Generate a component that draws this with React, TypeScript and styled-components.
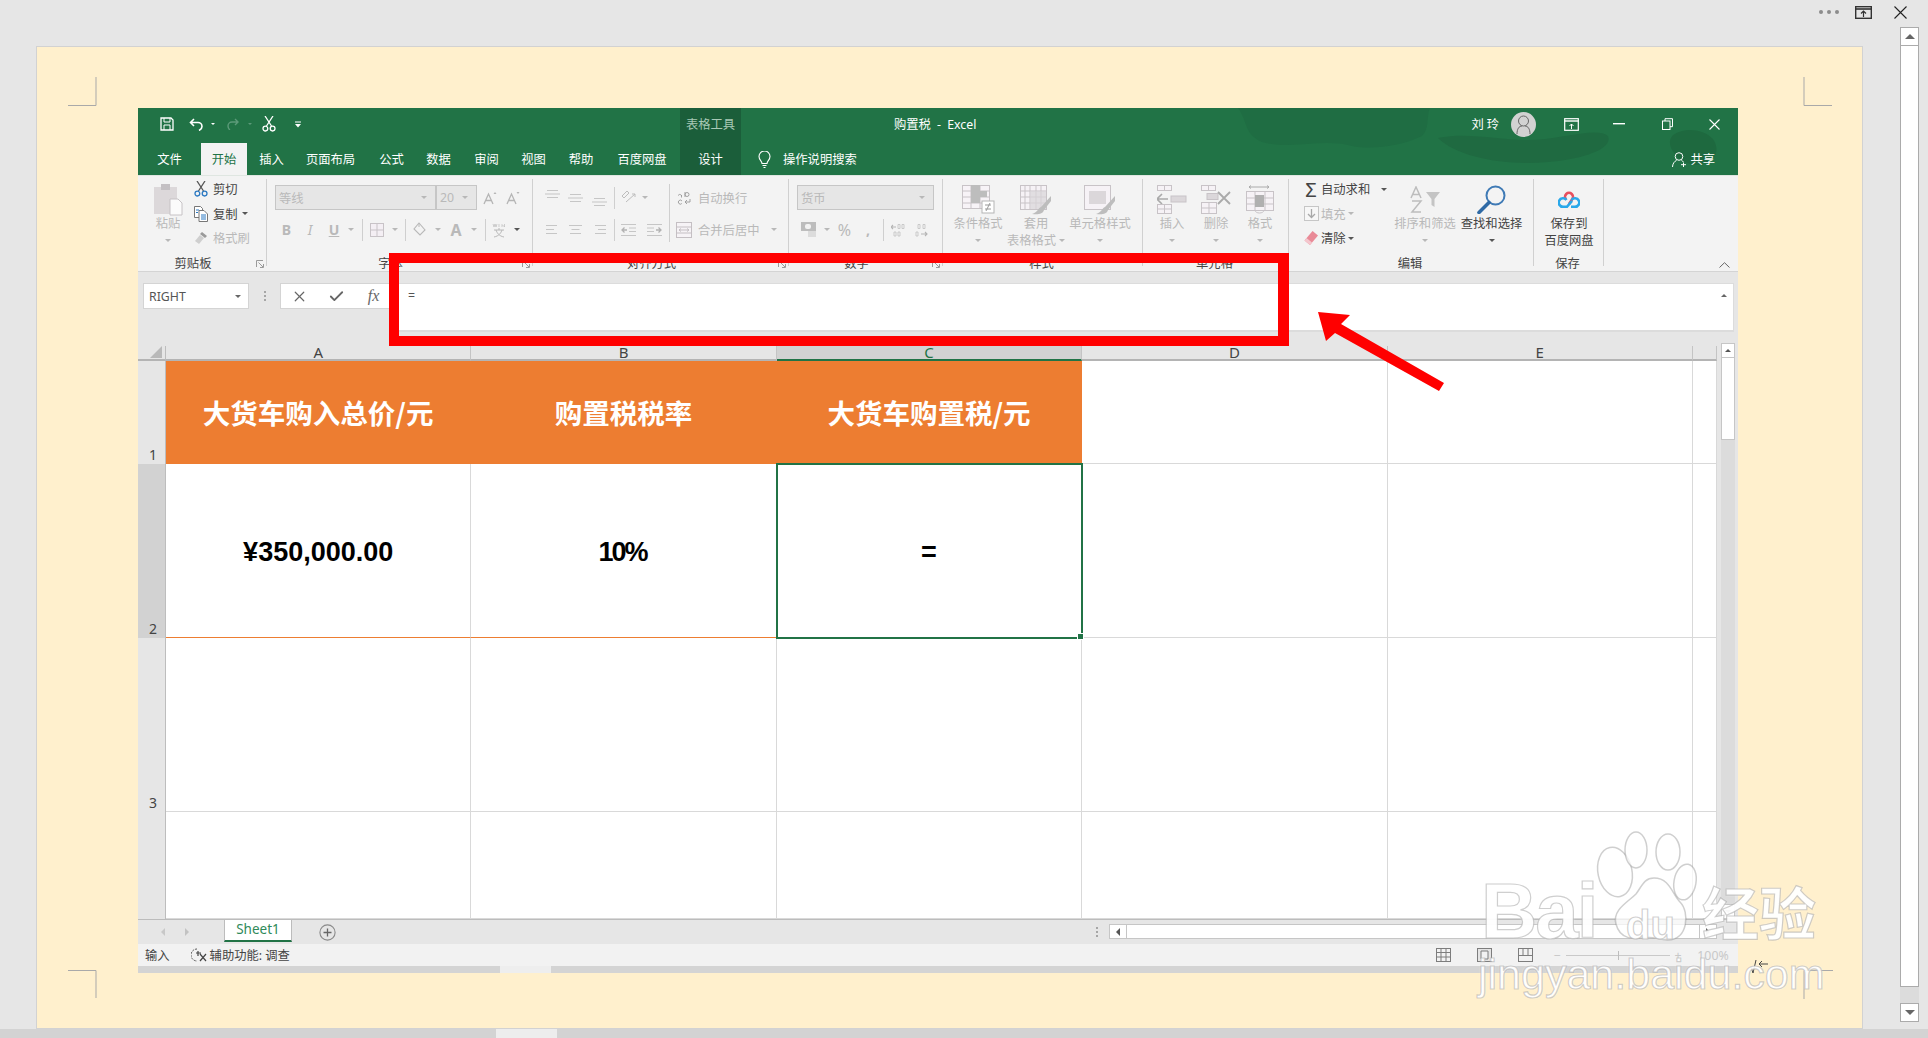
import React from 'react'
import styled, { createGlobalStyle } from 'styled-components'
import { Check, X } from 'lucide-react'

const GlobalStyle = createGlobalStyle`
   html, body {
      margin: 0;
      padding: 0;
      width: 1928px;
      height: 1038px;
      overflow: hidden;
      background: #e6e6e6;
      font-family: "Noto Sans", "Noto Sans CJK SC", sans-serif;
   }
`

const GREEN = '#217346'
const DIM = '#c8c3c7'
const DIMTXT = '#b9b9b9'
const DARK = '#444'

const Root = styled.div`
   position: relative;
   width: 1928px;
   height: 1038px;
   display: flex;
   flex-direction: column;
   overflow: hidden;
`
const TopBar = styled.div`
   height: 27px;
   display: flex;
   align-items: flex-start;
   justify-content: flex-end;
   padding: 6px 21px 0 0;
   box-sizing: border-box;
   gap: 22px;
`
const Dots = styled.div`
   display: flex;
   gap: 4px;
   margin-top: 4px;
   margin-right: -6px;
   i {
      width: 4px;
      height: 4px;
      border-radius: 50%;
      background: #8c8c8c;
   }
`
const Body = styled.div`
   height: 1002px;
   display: flex;
`
const PaperColumn = styled.div`
   width: 1862px;
   padding: 20px 0 0 37px;
   box-sizing: border-box;
`
const Paper = styled.div`
   width: 1825px;
   height: 981px;
   background: #fff0cd;
   box-shadow: 0 0 0 1px #d2d2d2;
   padding: 61px 0 0 101px;
   box-sizing: border-box;
`
const PageScroll = styled.div`
   width: 19px;
   height: 995px;
   margin-left: 38px;
   display: flex;
   flex-direction: column;
   background: #dcdcdc;
`
const PageScrollBtn = styled.div`
   height: 19px;
   flex: none;
   background: #fff;
   border: 1px solid #ababab;
   box-sizing: border-box;
   display: flex;
   align-items: center;
   justify-content: center;
`
const PageScrollThumb = styled.div`
   height: 941px;
   flex: none;
   background: #fff;
   border: 1px solid #ababab;
   border-top: 0;
   box-sizing: border-box;
`
const PageScrollTrack = styled.div`
   flex: 1;
`
const Tri = styled.i<{ $s?: number; $up?: boolean; $c?: string }>`
   width: 0;
   height: 0;
   flex: none;
   border-left: ${(p) => p.$s ?? 3}px solid transparent;
   border-right: ${(p) => p.$s ?? 3}px solid transparent;
   ${(p) => (p.$up ? 'border-bottom' : 'border-top')}: ${(p) => p.$s ?? 3}px solid ${(p) => p.$c ?? '#b8b8b8'};
`
const HBar = styled.div`
   height: 9px;
   background: #d3d3d3;
   padding-left: 496px;
`
const HBarThumb = styled.div`
   width: 61px;
   height: 9px;
   background: #ededed;
`

/* excel picture */
const Excel = styled.div`
   width: 1600px;
   height: 865px;
   background: #e6e6e6;
   display: flex;
   flex-direction: column;
`
const Head = styled.div`
   position: relative;
   height: 67px;
   flex: none;
   background: ${GREEN};
   color: #fff;
   font-size: 12.3px;
   overflow: hidden;
`
const HeadArt = styled.svg`
   position: absolute;
   left: 0;
   top: 0;
`
const TitleRow = styled.div`
   position: relative;
   height: 32px;
   display: flex;
   align-items: center;
   padding-left: 20px;
`
const TabRow = styled.div`
   position: relative;
   height: 32px;
   margin-top: 3px;
   display: flex;
   align-items: stretch;
`
const Slot = styled.span<{ $w: number; $ml?: number; $mr?: number; $h?: number; $c?: string; $fs?: number; $b?: boolean }>`
   width: ${(p) => p.$w}px;
   ${(p) => (p.$h ? `height: ${p.$h}px;` : '')}
   margin-left: ${(p) => p.$ml ?? 0}px;
   margin-right: ${(p) => p.$mr ?? 0}px;
   flex: none;
   display: flex;
   align-items: center;
   justify-content: center;
   ${(p) => (p.$c ? `color: ${p.$c};` : '')}
   ${(p) => (p.$fs ? `font-size: ${p.$fs}px;` : '')}
   ${(p) => (p.$b ? 'font-weight: 700;' : '')}
`
const ToolsBand = styled.div`
   width: 61px;
   height: 35px;
   margin-left: 366px;
   padding-bottom: 3px;
   box-sizing: border-box;
   align-self: flex-start;
   background: #1b5e3a;
   color: #a9c9b6;
   font-size: 12.3px;
   display: flex;
   align-items: center;
   justify-content: center;
   flex: none;
`
const DocTitle = styled.div`
   margin-left: 153px;
   font-size: 12.3px;
   word-spacing: 3px;
   white-space: pre;
`
const TitleRight = styled.div`
   margin-left: auto;
   display: flex;
   align-items: center;
`
const UserName = styled.span`
   letter-spacing: 3px;
   margin-right: 9px;
`
const Avatar = styled.div`
   width: 25px;
   height: 25px;
   border-radius: 50%;
   background: #d2d2d2;
   margin-right: 12px;
   display: flex;
   align-items: center;
   justify-content: center;
`
const Tab = styled.div<{ $w: number; $active?: boolean; $band?: boolean; $ml?: number }>`
   width: ${(p) => p.$w}px;
   margin-left: ${(p) => p.$ml ?? 0}px;
   flex: none;
   display: flex;
   align-items: center;
   justify-content: center;
   background: ${(p) => (p.$active ? '#f3f3f3' : p.$band ? '#1b5e3a' : 'transparent')};
   color: ${(p) => (p.$active ? GREEN : '#fff')};
`
const SearchHint = styled.div`
   display: flex;
   align-items: center;
   margin-left: 17px;
   gap: 12px;
`
const Share = styled.div`
   margin-left: auto;
   margin-right: 23px;
   display: flex;
   align-items: center;
   gap: 3px;
`

/* ribbon */
const Ribbon = styled.div`
   height: 97px;
   flex: none;
   background: #f3f3f3;
   border-top: 1px solid #dfe6e1;
   border-bottom: 1px solid #d4d4d4;
   box-sizing: border-box;
   display: flex;
   padding-top: 3px;
   font-size: 12.3px;
   color: ${DARK};
`
const Group = styled.div<{ $w: number }>`
   width: ${(p) => p.$w}px;
   height: 87px;
   flex: none;
   border-right: 1px solid #d0d0d0;
   box-sizing: border-box;
   display: flex;
   flex-direction: column;
`
const GroupBody = styled.div<{ $pl?: number; $col?: boolean; $pt?: number }>`
   height: 78px;
   flex: none;
   display: flex;
   flex-direction: ${(p) => (p.$col ? 'column' : 'row')};
   padding-left: ${(p) => p.$pl ?? 0}px;
   padding-top: ${(p) => p.$pt ?? 0}px;
   box-sizing: border-box;
`
const GroupLabel = styled.div`
   height: 14px;
   line-height: 14px;
   display: grid;
   grid-template-columns: 1fr auto 1fr;
   align-items: center;
   color: ${DARK};
   padding-right: 2px;
`
const LabelText = styled.span<{ $shift?: boolean }>`
   grid-column: 2;
   grid-row: 1;
   margin-right: ${(p) => (p.$shift ? 16 : 0)}px;
`
const LauncherBox = styled.span`
   grid-column: 3;
   grid-row: 1;
   justify-self: end;
   display: flex;
`
const Launcher = () => (
   <LauncherBox>
      <svg width="8" height="8" viewBox="0 0 8 8" fill="none">
         <path d="M.5 7V.5H7M2.500 2.500l4.500 4.500M7.500 4v3.500H4" stroke="#9a9a9a" />
      </svg>
   </LauncherBox>
)
const Tall = styled.div<{ $w: number; $off?: boolean; $ml?: number }>`
   width: ${(p) => p.$w}px;
   margin-left: ${(p) => p.$ml ?? 0}px;
   flex: none;
   display: flex;
   flex-direction: column;
   align-items: center;
   padding-top: 4px;
   color: ${(p) => (p.$off ? DIMTXT : DARK)};
   white-space: nowrap;
`
const TallIcon = styled.div`
   height: 33px;
   display: flex;
   align-items: center;
   justify-content: center;
`
const TallLine = styled.div`
   height: 16.500px;
   line-height: 16.500px;
   display: flex;
   align-items: center;
   gap: 3px;
`
const SmallCol = styled.div<{ $w: number; $ml?: number }>`
   width: ${(p) => p.$w}px;
   margin-left: ${(p) => p.$ml ?? 0}px;
   flex: none;
   display: flex;
   flex-direction: column;
   gap: 4.5px;
`
const SmallRow = styled.div<{ $off?: boolean }>`
   height: 20px;
   display: flex;
   align-items: center;
   white-space: nowrap;
   color: ${(p) => (p.$off ? DIMTXT : DARK)};
`
const ToolRow = styled.div<{ $mt?: number }>`
   height: 25px;
   flex: none;
   margin-top: ${(p) => p.$mt ?? 0}px;
   display: flex;
   align-items: center;
   color: ${DIMTXT};
   white-space: nowrap;
`
const Combo = styled.div<{ $w: number }>`
   width: ${(p) => p.$w}px;
   height: 25px;
   flex: none;
   background: #e6e6e6;
   border: 1px solid #c6c6c6;
   box-sizing: border-box;
   display: flex;
   align-items: center;
   justify-content: space-between;
   padding: 0 8px 0 3px;
   color: ${DIMTXT};
`
const VRule = styled.span<{ $ml?: number; $h?: number }>`
   width: 1px;
   height: ${(p) => p.$h ?? 22}px;
   margin-left: ${(p) => p.$ml ?? 0}px;
   background: #cfcfcf;
   flex: none;
`
const TallRule = styled(VRule)`
   align-self: flex-start;
   margin-top: -1px;
`
const Chevron = styled.div`
   flex: 1;
   display: flex;
   align-items: flex-end;
   justify-content: flex-end;
   padding: 0 8px 0 0;
   height: 89px;
`

/* formula bar */
const FormulaArea = styled.div`
   height: 71px;
   flex: none;
   padding: 11px 4px 0 5px;
   box-sizing: border-box;
   display: flex;
   align-items: flex-start;
`
const NameBox = styled.div`
   width: 106px;
   height: 26px;
   background: #fff;
   border: 1px solid #d4d4d4;
   box-sizing: border-box;
   display: flex;
   align-items: center;
   justify-content: space-between;
   padding: 0 7px 0 5px;
   color: #555;
   font-size: 12.3px;
`
const Grip = styled.div<{ $w?: number; $h?: number; $ml?: number }>`
   width: ${(p) => p.$w ?? 31}px;
   height: ${(p) => p.$h ?? 26}px;
   margin-left: ${(p) => p.$ml ?? 0}px;
   flex: none;
   display: flex;
   flex-direction: column;
   align-items: center;
   justify-content: center;
   gap: 2px;
   i {
      width: 2px;
      height: 2px;
      background: #a6a6a6;
   }
`
const FormulaBtns = styled.div`
   width: 109px;
   height: 26px;
   background: #fff;
   border: 1px solid #d4d4d4;
   border-right: 0;
   box-sizing: border-box;
   display: flex;
   align-items: center;
   color: #666;
`
const FormulaInput = styled.div`
   flex: 1;
   height: 49px;
   background: #fff;
   border: 1px solid #dcdcdc;
   border-bottom-width: 2px;
   box-sizing: border-box;
   display: flex;
   justify-content: space-between;
   padding: 3px 6px 0 18px;
   font-size: 12.3px;
   color: #555;
`
const ExpandTri = styled(Tri)`
   margin-top: 7px;
`
const Fx = styled.span`
   font-family: "Liberation Serif", serif;
   font-style: italic;
   font-size: 16px;
   color: #666;
`

/* sheet */
const Sheet = styled.div`
   height: 576px;
   flex: none;
   display: flex;
   align-items: flex-start;
`
const Grid = styled.div`
   margin-top: 3px;
   display: grid;
   grid-template-columns: 28px repeat(5, 305.4px) 24px;
   grid-template-rows: 15px 103px 174px 174px 107px;
   width: 1579px;
   flex: none;
`
const Corner = styled.div`
   position: relative;
   border-bottom: 2px solid #b4b4b4;
   border-right: 1px solid #bdbdbd;
   box-sizing: border-box;
   &::after {
      content: '';
      position: absolute;
      right: 3px;
      bottom: 1px;
      width: 0;
      height: 0;
      border-left: 12px solid transparent;
      border-bottom: 12px solid #b9b9b9;
   }
`
const ColHead = styled.div<{ $sel?: boolean }>`
   background: ${(p) => (p.$sel ? '#d2d2d2' : '#e6e6e6')};
   border-bottom: 2px solid ${(p) => (p.$sel ? GREEN : '#b4b4b4')};
   border-right: 1px solid #c4c4c4;
   color: ${(p) => (p.$sel ? GREEN : '#444')};
   box-sizing: border-box;
   font-size: 15px;
   line-height: 13px;
   text-align: center;
`
const RowHead = styled.div<{ $sel?: boolean }>`
   background: ${(p) => (p.$sel ? '#d2d2d2' : '#e6e6e6')};
   border-right: 1px solid #bdbdbd;
   box-sizing: border-box;
   color: #444;
   font-size: 14px;
   display: flex;
   align-items: flex-end;
   justify-content: center;
   padding: 0 0 0 3px;
   line-height: 18px;
`
const Cell = styled.div<{ $head?: boolean; $edge?: boolean; $sel?: boolean }>`
   position: relative;
   box-sizing: border-box;
   display: flex;
   align-items: center;
   justify-content: center;
   white-space: nowrap;
   padding-top: ${(p) => (p.$head ? 0 : 3)}px;
   background: ${(p) => (p.$head ? '#ed7d31' : '#fff')};
   color: ${(p) => (p.$head ? '#fff' : '#000')};
   font-weight: 700;
   font-size: ${(p) => (p.$head ? 27.5 : 27)}px;
   font-family: ${(p) =>
      p.$head ? '"Noto Sans CJK SC", "Noto Sans", sans-serif' : '"Liberation Sans", sans-serif'};
   border-right: 1px solid ${(p) => (p.$head ? '#ed7d31' : '#d9d9d9')};
   border-bottom: 1px solid ${(p) => (p.$head ? '#ed7d31' : p.$edge ? '#ed7d31' : '#d9d9d9')};
   ${(p) => (p.$sel ? `outline: 2px solid ${GREEN}; outline-offset: -1px; z-index: 1;` : '')}
`
const Handle = styled.i`
   position: absolute;
   right: -3px;
   bottom: -3px;
   width: 5px;
   height: 5px;
   background: ${GREEN};
   border: 1px solid #fff;
`
const Percent = styled.span`
   letter-spacing: -2px;
   margin-right: 2px;
`
const SheetScroll = styled.div`
   width: 21px;
   height: 576px;
   flex: none;
   display: flex;
   flex-direction: column;
   padding-left: 4px;
   box-sizing: border-box;
   background: #e6e6e6;
`
const SheetBtn = styled.div`
   width: 14px;
   height: 15px;
   flex: none;
   background: #fff;
   border: 1px solid #c6c6c6;
   box-sizing: border-box;
   display: flex;
   align-items: center;
   justify-content: center;
`
const SheetThumb = styled.div`
   width: 14px;
   height: 82px;
   flex: none;
   background: #fff;
   border: 1px solid #c6c6c6;
   border-top: 0;
   box-sizing: border-box;
`
const SheetTrack = styled.div`
   flex: 1;
   background: #dcdcdc;
   width: 14px;
`

/* tabs row + status bar */
const SheetTabs = styled.div`
   height: 25px;
   flex: none;
   border-top: 1px solid #bcbcbc;
   box-sizing: border-box;
   display: flex;
   align-items: flex-start;
`
const SheetTab = styled.div`
   width: 68px;
   height: 22px;
   margin-left: 2px;
   background: #fff;
   border-left: 1px solid #bcbcbc;
   border-right: 1px solid #bcbcbc;
   border-bottom: 2px solid ${GREEN};
   box-sizing: border-box;
   color: #2f8a5a;
   font-size: 13.5px;
   line-height: 19px;
   text-align: center;
`
const HScroll = styled.div`
   width: 608px;
   height: 15px;
   margin: 4px 0 0 5px;
   display: flex;
   background: #fff;
   border: 1px solid #c6c6c6;
   box-sizing: border-box;
`
const HScrollEnd = styled.div`
   width: 16px;
   flex: none;
   display: flex;
   align-items: center;
   justify-content: center;
   background: #fff;
`
const LeftTri = styled.i<{ $c?: string }>`
   width: 0;
   height: 0;
   border-top: 4px solid transparent;
   border-bottom: 4px solid transparent;
   border-right: 4px solid ${(p) => p.$c ?? '#555'};
`
const RightTri = styled.i<{ $c?: string }>`
   width: 0;
   height: 0;
   border-top: 4px solid transparent;
   border-bottom: 4px solid transparent;
   border-left: 4px solid ${(p) => p.$c ?? '#c2c2c2'};
`
const HTrack = styled.div`
   flex: 1;
   border-left: 1px solid #c6c6c6;
   border-right: 1px solid #c6c6c6;
`
const Status = styled.div`
   height: 22px;
   flex: none;
   background: #f2f2f2;
   display: flex;
   align-items: center;
   padding-left: 7px;
   font-size: 12.3px;
   color: ${DARK};
`
const StatusRight = styled.div`
   margin-left: auto;
   display: flex;
   align-items: center;
   color: #c8c8c8;
   padding-right: 7px;
`
const Zoom = styled.div`
   width: 104px;
   height: 1px;
   background: #c9c9c9;
   margin: 0 1px;
   display: flex;
   justify-content: center;
   i {
      width: 1px;
      height: 9px;
      margin-top: -4px;
      background: #bdbdbd;
   }
`
const Strip = styled.div`
   height: 7px;
   flex: none;
   background: #d4d4d4;
   padding-left: 362px;
`
const StripThumb = styled.div`
   width: 51px;
   height: 7px;
   background: #eeeeee;
`

/* things lying over the page */
const RedBox = styled.div`
   position: absolute;
   left: 389px;
   top: 253px;
   width: 900px;
   height: 93px;
   border: 10px solid #ff0000;
   border-right-width: 11px;
   box-sizing: border-box;
`
const Overlay = styled.svg`
   position: absolute;
   left: 0;
   top: 0;
   pointer-events: none;
`
const Wm = styled.span<{ $x: number; $y: number; $fs: number; $cjk?: boolean; $b?: boolean; $ls?: number }>`
   position: absolute;
   left: ${(p) => p.$x}px;
   top: ${(p) => p.$y}px;
   font-size: ${(p) => p.$fs}px;
   line-height: 1;
   letter-spacing: ${(p) => p.$ls ?? 0}px;
   font-weight: ${(p) => (p.$b ? 700 : 400)};
   font-family: ${(p) => (p.$cjk ? '"Noto Sans CJK SC", sans-serif' : '"Liberation Sans", sans-serif')};
   color: rgba(255, 255, 255, 0.78);
   -webkit-text-stroke: 1.2px rgba(130, 130, 130, 0.38);
   text-shadow: 0 0 2px rgba(255, 255, 255, 0.8);
   white-space: nowrap;
`

/* drawings */
const Svg: React.FC<{ w: number; h: number; children: React.ReactNode }> = ({ w, h, children }) => (
   <svg width={w} height={h} viewBox={`0 0 ${w} ${h}`} fill="none">
      {children}
   </svg>
)

const CutIcon: React.FC<{ c: string; ring: string }> = ({ c, ring }) => (
   <Svg w={14} h={16}>
      <path d="M3 0l6.5 10M11 0L4.5 10" stroke={c} strokeWidth="1.3" />
      <circle cx="3.4" cy="12.6" r="2.4" stroke={ring} strokeWidth="1.3" />
      <circle cx="10.6" cy="12.6" r="2.4" stroke={ring} strokeWidth="1.3" />
   </Svg>
)
const PasteIcon = () => (
   <Svg w={30} h={32}>
      <rect x="1" y="3" width="23" height="27" fill="#dcd8da" />
      <rect x="8" y="0" width="9" height="6" fill="#c4c0c3" />
      <path d="M17 15h8l4 4v12H17z" fill="#fbfbfb" stroke="#c6c2c5" />
   </Svg>
)
const CopyIcon = () => (
   <Svg w={14} h={16}>
      <path d="M.5.5h6l2 2v9h-8z" fill="#fff" stroke="#777" />
      <path d="M5 4.500h5l3.500 3.500v7.500H5z" fill="#fff" stroke="#777" />
      <path d="M2 4h3M2 6.500h2M7 9h5M7 11h5M7 13h5" stroke="#2b79c2" />
   </Svg>
)
const BrushIcon = () => (
   <Svg w={14} h={14}>
      <path d="M8 1l5 4-2 2-5-4z" fill="#9a9a9a" />
      <path d="M6 4l4 3-5 6-4-3z" fill="#cfcfcf" />
   </Svg>
)
const GrowA: React.FC<{ up?: boolean }> = ({ up }) => (
   <Svg w={14} h={14}>
      <path d="M1 13L5.500 3 10 13M3 9.500h5" stroke="#b5b5b5" strokeWidth="1.3" />
      <path d={up ? 'M10.500 3l1.500-2 1.500 2z' : 'M10.500 1l1.500 2 1.500-2z'} fill="#b5b5b5" />
   </Svg>
)
const BorderIcon = () => (
   <Svg w={14} h={14}>
      <rect x=".5" y=".5" width="13" height="13" fill="#f4eff4" stroke={DIM} />
      <path d="M7 .5v13M.5 7h13" stroke={DIM} />
   </Svg>
)
const BucketIcon = () => (
   <Svg w={14} h={15}>
      <path d="M6 1l6 7-5 5-6-6z" stroke="#b8b8b8" strokeWidth="1.1" />
      <path d="M6 1v4" stroke="#b8b8b8" />
   </Svg>
)
const WenIcon = () => (
   <Svg w={14} h={16}>
      <path d="M1 2l1 3 1-3 1 3 1-3M7 2v3M10 5V2.500l2.500 2.500V2" stroke="#bbb" strokeWidth=".7" />
      <path d="M2 8h10M7 6v2M4 8c1 3 3 6 8 7M10 8c-1 3-3 6-8 7" stroke="#b8b8b8" />
   </Svg>
)
const LinesIcon: React.FC<{ widths: number[]; align: 'l' | 'c' | 'r'; w?: number }> = ({ widths, align, w = 13 }) => (
   <Svg w={w} h={10}>
      {widths.map((v, i) => {
         const x = align === 'l' ? 0 : align === 'r' ? w - v : (w - v) / 2
         return <rect key={i} x={x} y={i * 4} width={v} height="1" fill="#c6c6c6" />
      })}
   </Svg>
)
const VAlign: React.FC<{ y: number }> = ({ y }) => (
   <Svg w={15} h={16}>
      {[0, 3.500, 7].map((o, i) => (
         <rect key={i} x={i === 1 ? 0 : 2} y={y + o} width={i === 1 ? 15 : 11} height="1" fill="#c6c6c6" />
      ))}
   </Svg>
)
const OrientIcon = () => (
   <Svg w={15} h={15}>
      <path d="M1 6l5-5 2 2-5 5zM5 12l9-8M14 4l-3 0M14 4l0 3" stroke="#bdbdbd" strokeWidth="1" />
   </Svg>
)
const WrapIcon = () => (
   <Svg w={14} h={15}>
      <path d="M8 2v5M8 4.500a2 2 0 114 0 2 2 0 11-4 0M4.500 5v2.500M4.500 6c0-2-3.500-2-3-.5" stroke="#999" strokeWidth=".9" />
      <path d="M5 11a2 2 0 10-.2 2.500M13 9v3H8M10 10l-2 2 2 2" stroke="#999" strokeWidth=".9" />
   </Svg>
)
const MergeIcon = () => (
   <Svg w={16} h={16}>
      <rect x=".5" y=".5" width="15" height="15" stroke="#c4bfc3" fill="#f6f3f6" />
      <path d="M.5 5h15M.5 11h15M3 8h10M3 8l2-1.500M3 8l2 1.500M13 8l-2-1.500M13 8l-2 1.500" stroke="#c4bfc3" />
   </Svg>
)
const IndentIcon: React.FC<{ flip?: boolean }> = ({ flip }) => (
   <Svg w={15} h={12}>
      <g transform={flip ? 'translate(15 0) scale(-1 1)' : undefined}>
         <path d="M0 .5h15M8 4h7M8 7.500h7M0 11.500h15" stroke="#c6c6c6" />
         <path d="M6 6H1M3.500 3.500L1 6l2.500 2.500" stroke="#b2b2b2" strokeWidth="1.3" />
      </g>
   </Svg>
)
const MoneyIcon = () => (
   <Svg w={16} h={16}>
      <rect x="0" y="0" width="15" height="9" fill="#bdbdbd" />
      <rect x="4" y="2" width="6" height="5" rx="2" fill="#f3f3f3" />
      <path d="M7 9h8v6H7z" fill="#dcdcdc" />
   </Svg>
)
const DecIcon: React.FC<{ more?: boolean }> = ({ more }) => (
   <Svg w={14} h={14}>
      <path d={more ? 'M0 4h5M2 2L0 4l2 2' : 'M6 11h6M10 9l2 2-2 2'} stroke="#b5b5b5" strokeWidth="1.1" />
      <path
         d={more ? 'M7 1.500h2v4H7zM11 1.500h2v4h-2zM7 9h2v4H7zM3 9h2v4H3z' : 'M3 1.500h2v4H3zM8 1.500h2v4H8zM1 9h2v4H1z'}
         stroke="#c0c0c0"
         strokeWidth=".8"
      />
   </Svg>
)
const CondIcon = () => (
   <Svg w={33} h={29}>
      <rect x=".5" y=".5" width="27" height="23" fill="#f7f3f7" stroke={DIM} />
      <path d="M9 .5v23M18 .5v23M.5 6h27M.5 12h27M.5 18h27" stroke={DIM} />
      <rect x="9" y="0" width="9" height="6" fill="#bdbdbd" />
      <rect x="9" y="6" width="16" height="6" fill="#bdbdbd" />
      <rect x="9" y="12" width="9" height="6" fill="#bdbdbd" />
      <rect x="20" y="16" width="12" height="12" fill="#fff" stroke="#b5b5b5" />
      <path d="M23 20h6M23 24h6M28 18l-4 8" stroke="#999" />
   </Svg>
)
const TableStyleIcon: React.FC<{ cell?: boolean }> = ({ cell }) => (
   <Svg w={32} h={30}>
      <rect x=".5" y=".5" width="26" height="24" fill="#f6f2f6" stroke={DIM} />
      {cell ? (
         <rect x="5" y="6" width="17" height="13" fill="#dbd7da" />
      ) : (
         <path d="M5 .5v24M10 .5v24M16 .5v24M21 .5v24M.5 6h26M.5 12h26M.5 18h26" stroke={DIM} />
      )}
      {!cell && <rect x="10" y="6" width="16" height="18" fill="#d9d5d8" opacity=".7" />}
      <path d="M31 11l-10 11 3 3 7-9zM21 22c-3 1-3 5-9 7 6 1 11 0 12-4z" fill="#bdbdbd" />
   </Svg>
)
const InsertIcon = () => (
   <Svg w={30} h={29}>
      <rect x=".5" y=".5" width="14" height="5" fill="#f6f2f6" stroke={DIM} />
      <path d="M7.500.5v5" stroke={DIM} />
      <rect x="14" y="11" width="15" height="6" fill="#dbd7da" stroke={DIM} />
      <path d="M0 14h11M5 9l-5 5 5 5" stroke="#aaa" strokeWidth="1.6" />
      <rect x=".5" y="19.500" width="14" height="9" fill="#f6f2f6" stroke={DIM} />
      <path d="M7.500 19v10M.5 24h14" stroke={DIM} />
   </Svg>
)
const DeleteIcon = () => (
   <Svg w={30} h={29}>
      <rect x=".5" y=".5" width="14" height="5" fill="#f6f2f6" stroke={DIM} />
      <path d="M7.500.5v5" stroke={DIM} />
      <rect x="6" y="8.500" width="11" height="6" fill="#dbd7da" stroke={DIM} />
      <path d="M17 7l12 12M29 7L17 19" stroke="#aaa" strokeWidth="1.8" />
      <rect x=".5" y="17.500" width="15" height="11" fill="#f6f2f6" stroke={DIM} />
      <path d="M8 17v12M.5 23h15" stroke={DIM} />
   </Svg>
)
const FormatIcon = () => (
   <Svg w={28} h={29}>
      <path d="M3 2h20M3 2l2-1.500M3 2l2 1.500M23 2l-2-1.500M23 2l-2 1.500" stroke="#aaa" />
      <rect x=".5" y="6.500" width="27" height="19" fill="#f6f2f6" stroke={DIM} />
      <path d="M9 6v20M19 6v20M.5 13h27M.5 19h27" stroke={DIM} />
      <rect x="9" y="10" width="9" height="12" fill="#b0b0b0" />
      <path d="M9 25c0 4 9 4 9 0" stroke={DIM} />
   </Svg>
)
const FillIcon = () => (
   <Svg w={15} h={15}>
      <rect x=".5" y=".5" width="14" height="14" fill="#f7f7f7" stroke="#c6c6c6" />
      <path d="M7.500 3v8M4 8l3.500 3.500L11 8" stroke="#a8a8a8" strokeWidth="1.3" />
   </Svg>
)
const EraserIcon = () => (
   <Svg w={14} h={14}>
      <path d="M8.500 0L14 4.500 6 14 .5 9.500z" fill="#e98a97" />
      <path d="M.5 9.500L6 14l2-2.400L2.500 7z" fill="#f4c6cd" />
   </Svg>
)
const SortIcon = () => (
   <Svg w={31} h={27}>
      <path d="M1 12L6 1l5 11M3 8.500h6M2 15h9L2 26h9" stroke="#bdbdbd" strokeWidth="1.5" />
      <path d="M16 6h14l-5.500 7v8l-3-2v-6z" fill="#c4c4c4" />
   </Svg>
)
const FindIcon = () => (
   <Svg w={29} h={29}>
      <circle cx="18.500" cy="10.500" r="9" stroke="#3f7ab5" strokeWidth="2" />
      <path d="M12 17.500L2 27.500" stroke="#2f6aa5" strokeWidth="3.6" strokeLinecap="round" />
   </Svg>
)
const BaiduCloud = () => (
   <Svg w={22} h={18}>
      <path d="M8 8.500a4 4 0 116 0L11 13" stroke="#e8505e" strokeWidth="2.6" />
      <path d="M8.500 9A4.300 4.300 0 105 15.800h4l5-6" stroke="#2aa8ea" strokeWidth="2.6" />
      <path d="M13.500 9a4.300 4.300 0 113.500 6.800h-4" stroke="#2aa8ea" strokeWidth="2.6" />
   </Svg>
)
const SheetViewIcon: React.FC<{ kind: 'grid' | 'page' | 'brk' }> = ({ kind }) => (
   <Svg w={15} h={14}>
      <rect x=".5" y=".5" width="14" height="13" stroke="#7d7d7d" fill={kind === 'page' ? '#e4e4e4' : 'none'} />
      {kind === 'grid' && <path d="M5 .5v13M10 .5v13M.5 4.500h14M.5 9h14" stroke="#7d7d7d" />}
      {kind === 'page' && <path d="M4 3h7v8H4z" stroke="#7d7d7d" fill="#f2f2f2" />}
      {kind === 'brk' && <path d="M5 .5v7h5v-7M.5 7.500h14" stroke="#7d7d7d" />}
   </Svg>
)

const tabs = [
   { t: '文件', w: 63 },
   { t: '开始', w: 46, active: true },
   { t: '插入', w: 49 },
   { t: '页面布局', w: 69 },
   { t: '公式', w: 53 },
   { t: '数据', w: 41 },
   { t: '审阅', w: 55 },
   { t: '视图', w: 39 },
   { t: '帮助', w: 56 },
   { t: '百度网盘', w: 66 },
]

const App: React.FC = () => (
   <Root>
      <GlobalStyle />
      <TopBar>
         <Dots>
            <i />
            <i />
            <i />
         </Dots>
         <Svg w={17} h={13}>
            <rect x=".7" y=".7" width="15.600" height="11.600" stroke="#333" strokeWidth="1.4" />
            <path d="M.5 3h16" stroke="#333" strokeWidth="1.6" />
            <path d="M8.500 11V5.500M6 7.500l2.500-2.500L11 7.500" stroke="#333" strokeWidth="1.2" />
         </Svg>
         <Svg w={13} h={13}>
            <path d="M.5.5l12 12M12.500.5l-12 12" stroke="#222" strokeWidth="1.1" />
         </Svg>
      </TopBar>
      <Body>
         <PaperColumn>
            <Paper>
               <Excel>
                  <Head>
                     <HeadArt width="1600" height="67">
                        <path d="M1100 0c10 14 6 26 24 34 30 8 60-4 90 4 20 4 50 0 70-10 8-8 4-20 8-28z" fill="#1f6d43" />
                        <path d="M1300 30c30-6 60 2 90 2 30 0 70-14 80-4 6 14-30 24-60 26-40 4-90-4-110-24z" fill="#1f6a41" />
                        <path d="M1535 27c12-8 30-6 40 4 8 12 2 24-16 26-18 0-34-20-24-30z" fill="#1e693f" />
                     </HeadArt>
                     <TitleRow>
                        <Slot $w={18}>
                           <Svg w={14} h={14}>
                              <path d="M1 1h10l2 2v10H1z" stroke="#fff" strokeWidth="1.3" />
                              <path d="M4 1v4h6V1M4 13V8h6v5" stroke="#fff" />
                           </Svg>
                        </Slot>
                        <Slot $w={20} $ml={10}>
                           <Svg w={15} h={13}>
                              <path d="M5 1L1.500 4.500 5 8M2 4.500h7a4 4 0 014 4c0 2-1 3-3 4" stroke="#fff" strokeWidth="1.6" />
                           </Svg>
                        </Slot>
                        <Slot $w={14}>
                           <Tri $s={2.5} $c="#fff" />
                        </Slot>
                        <Slot $w={24}>
                           <Svg w={13} h={12}>
                              <path d="M9 1l3 3-3 3M12 4H6a4 4 0 00-4 4c0 2 .5 3 2 4" stroke="#5c9a79" strokeWidth="1.4" />
                           </Svg>
                        </Slot>
                        <Slot $w={12}>
                           <Tri $s={2.5} $c="#5c9a79" />
                        </Slot>
                        <Slot $w={26}>
                           <CutIcon c="#fff" ring="#fff" />
                        </Slot>
                        <Slot $w={32}>
                           <Svg w={6} h={7}>
                              <path d="M0 1h6" stroke="#fff" />
                              <path d="M0 3h6L3 6.500z" fill="#fff" />
                           </Svg>
                        </Slot>
                        <ToolsBand>表格工具</ToolsBand>
                        <DocTitle>购置税 - Excel</DocTitle>
                        <TitleRight>
                           <UserName>刘玲</UserName>
                           <Avatar>
                              <Svg w={15} h={19}>
                                 <circle cx="7.500" cy="6" r="5" stroke="#666" />
                                 <path d="M1 19c0-5 2-8 5-8M14 19c0-5-2-8-5-8" stroke="#666" />
                              </Svg>
                           </Avatar>
                           <Slot $w={46}>
                              <Svg w={15} h={13}>
                                 <rect x=".7" y=".7" width="13.600" height="11.600" stroke="#fff" strokeWidth="1.2" />
                                 <path d="M.5 3h14" stroke="#fff" strokeWidth="1.4" />
                                 <path d="M7.500 11V6M5.500 8l2-2 2 2" stroke="#fff" />
                              </Svg>
                           </Slot>
                           <Slot $w={50}>
                              <Svg w={12} h={2}>
                                 <rect width="12" height="1.400" fill="#fff" />
                              </Svg>
                           </Slot>
                           <Slot $w={46}>
                              <Svg w={11} h={12}>
                                 <rect x=".5" y="3" width="7.500" height="8.500" stroke="#fff" />
                                 <path d="M3 3V.7h7.500v8H8" stroke="#fff" />
                              </Svg>
                           </Slot>
                           <Slot $w={48}>
                              <Svg w={11} h={11}>
                                 <path d="M.5.5l10 10M10.500.5l-10 10" stroke="#fff" strokeWidth="1.1" />
                              </Svg>
                           </Slot>
                        </TitleRight>
                     </TitleRow>
                     <TabRow>
                        {tabs.map((t) => (
                           <Tab key={t.t} $w={t.w} $active={t.active}>
                              {t.t}
                           </Tab>
                        ))}
                        <Tab $w={61} $band $ml={5}>
                           设计
                        </Tab>
                        <SearchHint>
                           <Svg w={13} h={17}>
                              <path d="M4 12.500C4 10 1 9 1 5.500a5.500 5.500 0 0111 0c0 3.500-3 4.500-3 7zM4.500 14.500h4M5.500 16.500h2" stroke="#fff" strokeWidth="1.1" />
                           </Svg>
                           操作说明搜索
                        </SearchHint>
                        <Share>
                           <Svg w={15} h={15}>
                              <circle cx="7" cy="4.500" r="3.800" stroke="#fff" />
                              <path d="M.5 15c0-3 2-6 4-6.500M9.500 8.500c1 .3 1.500 1 2 1.500M11.500 10.500v4.500M9 12.700h5" stroke="#fff" />
                           </Svg>
                           共享
                        </Share>
                     </TabRow>
                  </Head>

                  <Ribbon>
                     <Group $w={129}>
                        <GroupBody $pl={8}>
                           <Tall $w={44} $off>
                              <TallIcon>
                                 <PasteIcon />
                              </TallIcon>
                              <TallLine>粘贴</TallLine>
                              <TallLine>
                                 <Tri />
                              </TallLine>
                           </Tall>
                           <SmallCol $w={70} $ml={4}>
                              <SmallRow>
                                 <Slot $w={14} $h={20} $mr={5}>
                                    <CutIcon c="#555" ring="#2b79c2" />
                                 </Slot>
                                 剪切
                              </SmallRow>
                              <SmallRow>
                                 <Slot $w={14} $h={20} $mr={5}>
                                    <CopyIcon />
                                 </Slot>
                                 复制
                                 <Slot $w={14}>
                                    <Tri $c="#555" />
                                 </Slot>
                              </SmallRow>
                              <SmallRow $off>
                                 <Slot $w={14} $h={20} $mr={5}>
                                    <BrushIcon />
                                 </Slot>
                                 格式刷
                              </SmallRow>
                           </SmallCol>
                        </GroupBody>
                        <GroupLabel>
                           <Launcher />
                           <LabelText $shift>剪贴板</LabelText>
                        </GroupLabel>
                     </Group>

                     <Group $w={266}>
                        <GroupBody $pl={8} $pt={6} $col>
                           <ToolRow>
                              <Combo $w={161}>
                                 等线
                                 <Tri />
                              </Combo>
                              <Combo $w={41}>
                                 20
                                 <Tri />
                              </Combo>
                              <Slot $w={24} $ml={1}>
                                 <GrowA up />
                              </Slot>
                              <Slot $w={21}>
                                 <GrowA />
                              </Slot>
                           </ToolRow>
                           <ToolRow $mt={7}>
                              <Slot $w={23} $b $fs={14}>
                                 B
                              </Slot>
                              <Slot $w={24} $fs={14}>
                                 <em>I</em>
                              </Slot>
                              <Slot $w={24} $b $fs={14}>
                                 <u>U</u>
                              </Slot>
                              <Slot $w={10}>
                                 <Tri />
                              </Slot>
                              <VRule $ml={6} />
                              <Slot $w={28}>
                                 <BorderIcon />
                              </Slot>
                              <Slot $w={8}>
                                 <Tri />
                              </Slot>
                              <VRule $ml={6} />
                              <Slot $w={27}>
                                 <BucketIcon />
                              </Slot>
                              <Slot $w={10}>
                                 <Tri />
                              </Slot>
                              <Slot $w={26} $b $fs={16}>
                                 A
                              </Slot>
                              <Slot $w={10}>
                                 <Tri />
                              </Slot>
                              <VRule $ml={6} />
                              <Slot $w={26}>
                                 <WenIcon />
                              </Slot>
                              <Slot $w={10}>
                                 <Tri $c="#555" />
                              </Slot>
                           </ToolRow>
                        </GroupBody>
                        <GroupLabel>
                           <Launcher />
                           <LabelText $shift>字体</LabelText>
                        </GroupLabel>
                     </Group>

                     <Group $w={256}>
                        <GroupBody $pl={7} $pt={6} $col>
                           <ToolRow>
                              <Slot $w={24}>
                                 <VAlign y={0} />
                              </Slot>
                              <Slot $w={23}>
                                 <VAlign y={4} />
                              </Slot>
                              <Slot $w={24}>
                                 <VAlign y={8} />
                              </Slot>
                              <VRule $ml={3} />
                              <Slot $w={26}>
                                 <OrientIcon />
                              </Slot>
                              <Slot $w={8}>
                                 <Tri />
                              </Slot>
                              <TallRule $ml={20} $h={58} />
                              <Slot $w={28}>
                                 <WrapIcon />
                              </Slot>
                              自动换行
                           </ToolRow>
                           <ToolRow $mt={7}>
                              <Slot $w={24}>
                                 <LinesIcon widths={[11, 8, 11]} align="l" />
                              </Slot>
                              <Slot $w={23}>
                                 <LinesIcon widths={[13, 8, 11]} align="c" />
                              </Slot>
                              <Slot $w={24}>
                                 <LinesIcon widths={[11, 8, 11]} align="r" />
                              </Slot>
                              <VRule $ml={3} />
                              <Slot $w={27}>
                                 <IndentIcon />
                              </Slot>
                              <Slot $w={24}>
                                 <IndentIcon flip />
                              </Slot>
                              <Slot $w={28} $ml={4}>
                                 <MergeIcon />
                              </Slot>
                              合并后居中
                              <Slot $w={10} $ml={9}>
                                 <Tri />
                              </Slot>
                           </ToolRow>
                        </GroupBody>
                        <GroupLabel>
                           <Launcher />
                           <LabelText $shift>对齐方式</LabelText>
                        </GroupLabel>
                     </Group>

                     <Group $w={154}>
                        <GroupBody $pl={8} $pt={6} $col>
                           <ToolRow>
                              <Combo $w={137}>
                                 货币
                                 <Tri />
                              </Combo>
                           </ToolRow>
                           <ToolRow $mt={7}>
                              <Slot $w={24}>
                                 <MoneyIcon />
                              </Slot>
                              <Slot $w={12}>
                                 <Tri />
                              </Slot>
                              <Slot $w={23} $fs={16}>
                                 %
                              </Slot>
                              <Slot $w={24} $b $fs={14}>
                                 ,
                              </Slot>
                              <VRule $ml={3} />
                              <Slot $w={27}>
                                 <DecIcon more />
                              </Slot>
                              <Slot $w={21}>
                                 <DecIcon />
                              </Slot>
                           </ToolRow>
                        </GroupBody>
                        <GroupLabel>
                           <Launcher />
                           <LabelText $shift>数字</LabelText>
                        </GroupLabel>
                     </Group>

                     <Group $w={200}>
                        <GroupBody $pl={8}>
                           <Tall $w={54} $off>
                              <TallIcon>
                                 <CondIcon />
                              </TallIcon>
                              <TallLine>条件格式</TallLine>
                              <TallLine>
                                 <Tri />
                              </TallLine>
                           </Tall>
                           <Tall $w={62} $off>
                              <TallIcon>
                                 <TableStyleIcon />
                              </TallIcon>
                              <TallLine>套用</TallLine>
                              <TallLine>
                                 表格格式
                                 <Tri />
                              </TallLine>
                           </Tall>
                           <Tall $w={66} $off>
                              <TallIcon>
                                 <TableStyleIcon cell />
                              </TallIcon>
                              <TallLine>单元格样式</TallLine>
                              <TallLine>
                                 <Tri />
                              </TallLine>
                           </Tall>
                        </GroupBody>
                        <GroupLabel>
                           <LabelText>样式</LabelText>
                        </GroupLabel>
                     </Group>

                     <Group $w={146}>
                        <GroupBody $pl={7}>
                           <Tall $w={44} $off>
                              <TallIcon>
                                 <InsertIcon />
                              </TallIcon>
                              <TallLine>插入</TallLine>
                              <TallLine>
                                 <Tri />
                              </TallLine>
                           </Tall>
                           <Tall $w={44} $off>
                              <TallIcon>
                                 <DeleteIcon />
                              </TallIcon>
                              <TallLine>删除</TallLine>
                              <TallLine>
                                 <Tri />
                              </TallLine>
                           </Tall>
                           <Tall $w={44} $off>
                              <TallIcon>
                                 <FormatIcon />
                              </TallIcon>
                              <TallLine>格式</TallLine>
                              <TallLine>
                                 <Tri />
                              </TallLine>
                           </Tall>
                        </GroupBody>
                        <GroupLabel>
                           <LabelText>单元格</LabelText>
                        </GroupLabel>
                     </Group>

                     <Group $w={245}>
                        <GroupBody $pl={12}>
                           <SmallCol $w={91}>
                              <SmallRow>
                                 <Slot $w={20} $fs={20}>
                                    Σ
                                 </Slot>
                                 自动求和
                                 <Slot $w={28}>
                                    <Tri $c="#555" />
                                 </Slot>
                              </SmallRow>
                              <SmallRow $off>
                                 <Slot $w={20}>
                                    <FillIcon />
                                 </Slot>
                                 填充
                                 <Slot $w={10}>
                                    <Tri />
                                 </Slot>
                              </SmallRow>
                              <SmallRow>
                                 <Slot $w={20}>
                                    <EraserIcon />
                                 </Slot>
                                 清除
                                 <Slot $w={10}>
                                    <Tri $c="#555" />
                                 </Slot>
                              </SmallRow>
                           </SmallCol>
                           <Tall $w={66} $off>
                              <TallIcon>
                                 <SortIcon />
                              </TallIcon>
                              <TallLine>排序和筛选</TallLine>
                              <TallLine>
                                 <Tri />
                              </TallLine>
                           </Tall>
                           <Tall $w={67}>
                              <TallIcon>
                                 <FindIcon />
                              </TallIcon>
                              <TallLine>查找和选择</TallLine>
                              <TallLine>
                                 <Tri $c="#555" />
                              </TallLine>
                           </Tall>
                        </GroupBody>
                        <GroupLabel>
                           <LabelText>编辑</LabelText>
                        </GroupLabel>
                     </Group>

                     <Group $w={70}>
                        <GroupBody>
                           <Tall $w={70}>
                              <TallIcon>
                                 <BaiduCloud />
                              </TallIcon>
                              <TallLine>保存到</TallLine>
                              <TallLine>百度网盘</TallLine>
                           </Tall>
                        </GroupBody>
                        <GroupLabel>
                           <LabelText>保存</LabelText>
                        </GroupLabel>
                     </Group>

                     <Chevron>
                        <Svg w={11} h={6}>
                           <path d="M.5 5.500L5.500.7l5 4.800" stroke="#666" />
                        </Svg>
                     </Chevron>
                  </Ribbon>

                  <FormulaArea>
                     <NameBox>
                        RIGHT
                        <Tri $c="#666" />
                     </NameBox>
                     <Grip>
                        <i />
                        <i />
                        <i />
                     </Grip>
                     <FormulaBtns>
                        <Slot $w={25} $ml={6}>
                           <X size={17} strokeWidth={1.7} />
                        </Slot>
                        <Slot $w={25} $ml={12}>
                           <Check size={17} strokeWidth={2.6} />
                        </Slot>
                        <Slot $w={25} $ml={12}>
                           <Fx>fx</Fx>
                        </Slot>
                     </FormulaBtns>
                     <FormulaInput>
                        =
                        <ExpandTri $up $s={3} $c="#666" />
                     </FormulaInput>
                  </FormulaArea>

                  <Sheet>
                     <Grid>
                        <Corner />
                        <ColHead>A</ColHead>
                        <ColHead>B</ColHead>
                        <ColHead $sel>C</ColHead>
                        <ColHead>D</ColHead>
                        <ColHead>E</ColHead>
                        <ColHead />

                        <RowHead>1</RowHead>
                        <Cell $head>大货车购入总价/元</Cell>
                        <Cell $head>购置税税率</Cell>
                        <Cell $head>大货车购置税/元</Cell>
                        <Cell />
                        <Cell />
                        <Cell />

                        <RowHead $sel>2</RowHead>
                        <Cell $edge>¥350,000.00</Cell>
                        <Cell $edge>
                           <Percent>10%</Percent>
                        </Cell>
                        <Cell $sel>
                           =
                           <Handle />
                        </Cell>
                        <Cell />
                        <Cell />
                        <Cell />

                        <RowHead>3</RowHead>
                        <Cell />
                        <Cell />
                        <Cell />
                        <Cell />
                        <Cell />
                        <Cell />

                        <RowHead />
                        <Cell />
                        <Cell />
                        <Cell />
                        <Cell />
                        <Cell />
                        <Cell />
                     </Grid>
                     <SheetScroll>
                        <SheetBtn>
                           <Tri $up $c="#555" />
                        </SheetBtn>
                        <SheetThumb />
                        <SheetTrack />
                        <SheetBtn>
                           <Tri $c="#555" />
                        </SheetBtn>
                     </SheetScroll>
                  </Sheet>

                  <SheetTabs>
                     <Slot $w={24} $h={24} $ml={13}>
                        <LeftTri $c="#c8c8c8" />
                     </Slot>
                     <Slot $w={24} $h={24}>
                        <RightTri />
                     </Slot>
                     <Slot $w={23} />
                     <SheetTab>Sheet1</SheetTab>
                     <Slot $w={34} $h={24} $ml={18}>
                        <Svg w={17} h={17}>
                           <circle cx="8.500" cy="8.500" r="7.600" stroke="#8a8a8a" strokeWidth="1.1" />
                           <path d="M4.500 8.500h8M8.500 4.500v8" stroke="#666" strokeWidth="1.3" />
                        </Svg>
                     </Slot>
                     <Grip $w={14} $h={24} $ml={746}>
                        <i />
                        <i />
                        <i />
                     </Grip>
                     <HScroll>
                        <HScrollEnd>
                           <LeftTri />
                        </HScrollEnd>
                        <HTrack />
                        <HScrollEnd>
                           <RightTri $c="#555" />
                        </HScrollEnd>
                     </HScroll>
                  </SheetTabs>

                  <Status>
                     输入
                     <Slot $w={17} $ml={21} $mr={2}>
                        <Svg w={16} h={14}>
                           <path d="M6 1a6 6 0 100 12" stroke="#555" strokeDasharray="2 1" />
                           <path d="M9 6l6 7M15 6l-6 7M7 3v5M5 5h5" stroke="#444" strokeWidth="1.2" />
                        </Svg>
                     </Slot>
                     辅助功能: 调查
                     <StatusRight>
                        <SheetViewIcon kind="grid" />
                        <Slot $w={67}>
                           <SheetViewIcon kind="page" />
                        </Slot>
                        <SheetViewIcon kind="brk" />
                        <Slot $w={16} $ml={16}>
                           −
                        </Slot>
                        <Zoom>
                           <i />
                        </Zoom>
                        <Slot $w={14}>+</Slot>
                        <Slot $w={36} $ml={10}>
                           100%
                        </Slot>
                     </StatusRight>
                  </Status>
                  <Strip>
                     <StripThumb />
                  </Strip>
               </Excel>
            </Paper>
         </PaperColumn>
         <PageScroll>
            <PageScrollBtn>
               <Tri $up $s={5} $c="#666" />
            </PageScrollBtn>
            <PageScrollThumb />
            <PageScrollTrack />
            <PageScrollBtn>
               <Tri $s={5} $c="#666" />
            </PageScrollBtn>
         </PageScroll>
      </Body>
      <HBar>
         <HBarThumb />
      </HBar>

      <RedBox />
      <Overlay width="1928" height="1038">
         <path d="M68 105.500h28V77M1832 105.500h-28V77M68 970.500h28V998M1833 970.500h-29V999" stroke="#a9a9a9" fill="none" />
         <path d="M1318 312l32 3-9 9 103 59-5 8-104-58-9 8z" fill="#ff0000" />
         <path d="M1751 967l2 6 3-13M1768 964h-8M1762 961l-3 3 3 3" stroke="#444" fill="none" />
         <g fill="rgba(255,255,255,.72)" stroke="rgba(130,130,130,.38)" strokeWidth="1.5">
            <ellipse cx="1615" cy="872" rx="17" ry="25" transform="rotate(-12 1615 872)" />
            <ellipse cx="1636" cy="850" rx="11" ry="18" />
            <ellipse cx="1668" cy="852" rx="12" ry="18" />
            <ellipse cx="1685" cy="882" rx="11" ry="18" transform="rotate(10 1685 882)" />
            <path d="M1654 878c16 0 18 16 26 24 10 10 8 38-12 38-10 0-14-4-24-2-10 1-24 2-28-14-4-14 12-22 20-30 6-8 8-16 18-16z" />
         </g>
      </Overlay>
      <Wm $x={1481} $y={872} $fs={78} $b $ls={-2}>
         Bai
      </Wm>
      <Wm $x={1626} $y={905} $fs={40} $b>
         du
      </Wm>
      <Wm $x={1702} $y={882} $fs={57} $cjk $b>
         经验
      </Wm>
      <Wm $x={1478} $y={953} $fs={43}>
         jingyan.baidu.com
      </Wm>
   </Root>
)

export default App
